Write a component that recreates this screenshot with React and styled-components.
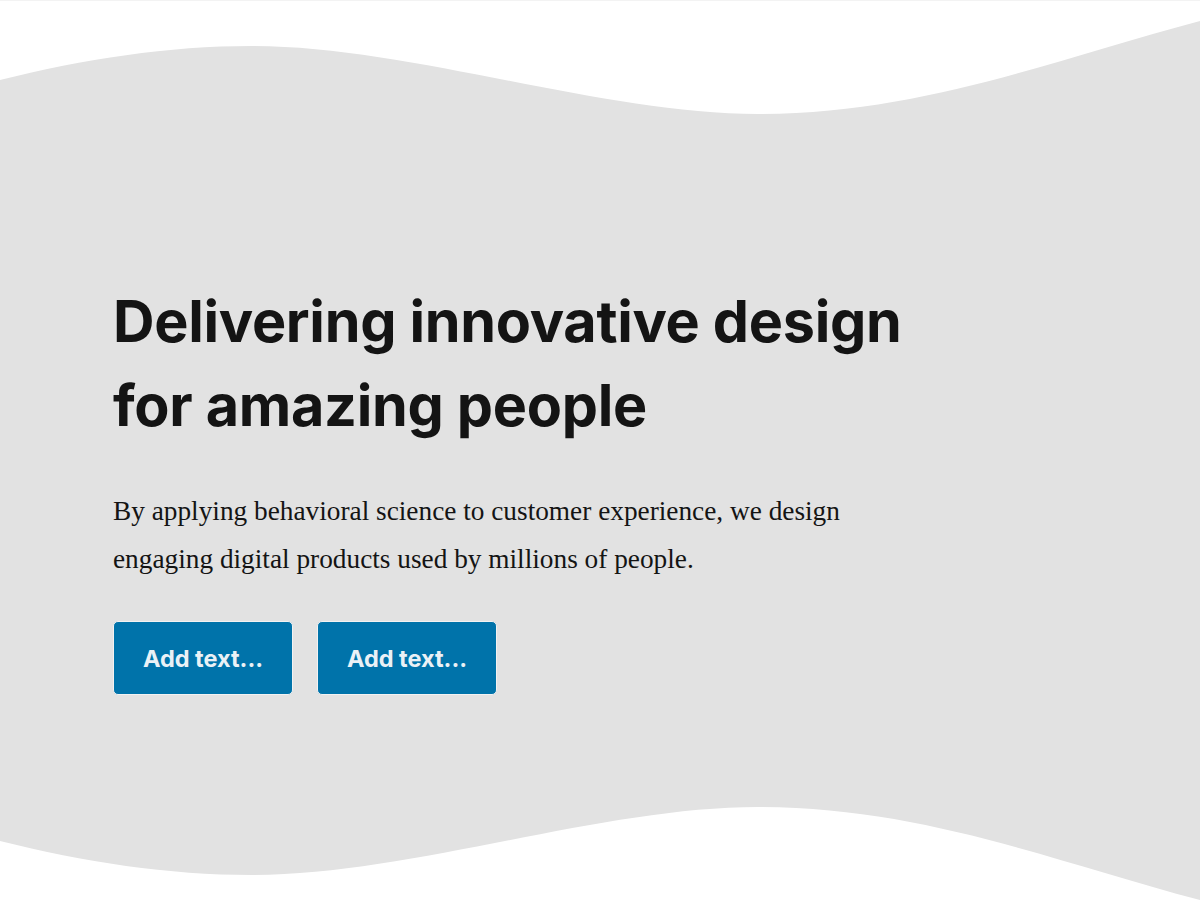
import React from 'react'
import styled, { createGlobalStyle } from 'styled-components'

const GlobalStyle = createGlobalStyle`
    html, body {
        margin: 0;
        padding: 0;
        background: #ffffff;
    }
    body {
        border-top: 1px solid #f3f3f3;
        font-family: Inter, 'Liberation Sans', sans-serif;
    }
`

const Hero = styled.section`
    display: flex;
    flex-direction: column;
    width: 1200px;
    height: 899px;
    overflow: hidden;
`

const Wave = styled.svg`
    display: block;
    width: 100%;
    height: ${({ $height }) => $height}px;
    flex-shrink: 0;
`

const Content = styled.div`
    flex: 1;
    display: flex;
    flex-direction: column;
    align-items: flex-start;
    padding: 158px 0 0 113px;
    background: #e2e2e2;
`

const Title = styled.h1`
    margin: 0;
    color: #141414;
    font-family: Inter, 'Liberation Sans', sans-serif;
    font-size: 57.5px;
    font-weight: 700;
    line-height: 84px;
    letter-spacing: -0.3px;
`

const Lead = styled.p`
    margin: 40px 0 0;
    color: #141414;
    font-family: 'Liberation Serif', serif;
    font-size: 27.3px;
    line-height: 48px;
`

const Actions = styled.div`
    display: flex;
    gap: 24px;
    margin-top: 38px;
`

const ActionButton = styled.a`
    display: flex;
    align-items: center;
    justify-content: center;
    box-sizing: border-box;
    width: 180px;
    height: 74px;
    border: 1px solid #f2f2f2;
    border-radius: 5px;
    background-color: #0073aa;
    color: #eaf1f6;
    font-family: Inter, 'Liberation Sans', sans-serif;
    font-size: 23.5px;
    font-weight: 700;
    text-decoration: none;
    cursor: pointer;
`

const GRAY = '#e2e2e2'

const App = () => (
    <>
        <GlobalStyle />
        <Hero>
            <Wave $height={120} viewBox="0 0 1200 120" preserveAspectRatio="none">
                <path
                    fill={GRAY}
                    d="M0 120 L0 79 C84 58 168 45 252 45 C410 45 600 113 758 113 C920 113 1050 60 1200 20 L1200 120 Z"
                />
            </Wave>
            <Content>
                <Title>
                    Delivering innovative design
                    <br />
                    for amazing people
                </Title>
                <Lead>
                    By applying behavioral science to customer experience, we design
                    <br />
                    engaging digital products used by millions of people.
                </Lead>
                <Actions>
                    <ActionButton>Add text...</ActionButton>
                    <ActionButton>Add text...</ActionButton>
                </Actions>
            </Content>
            <Wave $height={100} viewBox="0 0 1200 100" preserveAspectRatio="none">
                <path
                    fill={GRAY}
                    d="M0 0 L0 41 C84 62 168 75 252 75 C410 75 600 7 758 7 C920 7 1050 60 1200 100 L1200 0 Z"
                />
            </Wave>
        </Hero>
    </>
)

export default App
